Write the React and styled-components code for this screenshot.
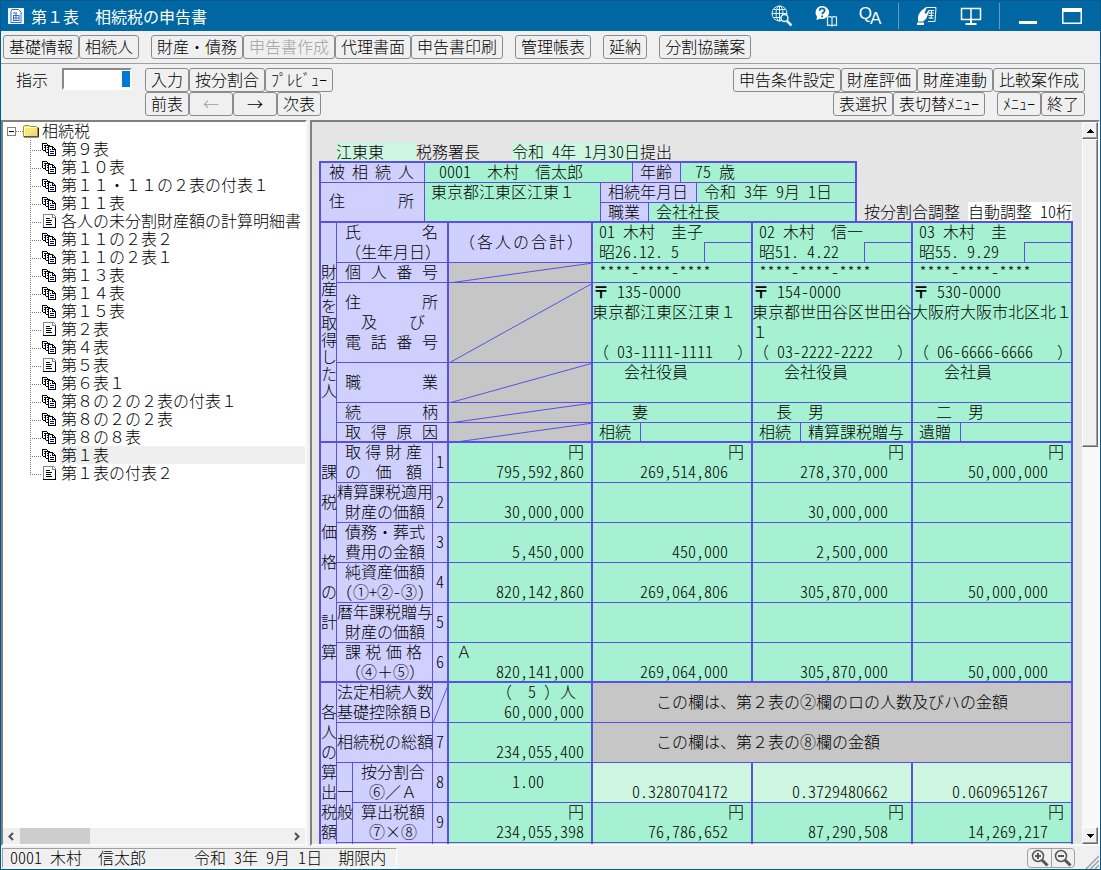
import styled, { createGlobalStyle, css } from "styled-components";

const LINE = "#5a50e6";
const LABEL = "#d0d0ff";
const GREEN = "#a6f1d1";
const PALE = "#cdf5df";
const GRAY = "#c6c6c6";

const tree = [
  ["第９表", "multi"],
  ["第１０表", "multi"],
  ["第１１・１１の２表の付表１", "multi"],
  ["第１１表", "multi"],
  ["各人の未分割財産額の計算明細書", "single"],
  ["第１１の２表２", "multi"],
  ["第１１の２表１", "multi"],
  ["第１３表", "multi"],
  ["第１４表", "multi"],
  ["第１５表", "multi"],
  ["第２表", "single"],
  ["第４表", "multi"],
  ["第５表", "single"],
  ["第６表１", "multi"],
  ["第８の２の２表の付表１", "multi"],
  ["第８の２の２表", "multi"],
  ["第８の８表", "multi"],
  ["第１表", "multi"],
  ["第１表の付表２", "single"],
];

const heirs = [
  {
    name: "01 木村　圭子",
    birth: "昭26.12. 5",
    zip: "135-0000",
    address: "東京都江東区江東１",
    tel: "03-1111-1111",
    job: "会社役員",
    relation: "　妻　",
    cause: ["相続", ""],
  },
  {
    name: "02 木村　信一",
    birth: "昭51. 4.22",
    zip: "154-0000",
    address: "東京都世田谷区世田谷１",
    tel: "03-2222-2222",
    job: "会社役員",
    relation: "長　男",
    cause: ["相続", "精算課税贈与"],
  },
  {
    name: "03 木村　圭",
    birth: "昭55. 9.29",
    zip: "530-0000",
    address: "大阪府大阪市北区北１",
    tel: "06-6666-6666",
    job: "会社員",
    relation: "二　男",
    cause: ["遺贈", ""],
  },
];

const taxable = [
  {
    no: "1",
    label: ["取得財産", "の価額"],
    spread: true,
    yen: true,
    values: ["795,592,860", "269,514,806", "278,370,000", "50,000,000"],
  },
  {
    no: "2",
    label: ["精算課税適用", "財産の価額"],
    values: ["30,000,000", "", "30,000,000", ""],
  },
  {
    no: "3",
    label: ["債務・葬式", "費用の金額"],
    values: ["5,450,000", "450,000", "2,500,000", ""],
  },
  {
    no: "4",
    label: ["純資産価額", "(①+②-③)"],
    values: ["820,142,860", "269,064,806", "305,870,000", "50,000,000"],
  },
  {
    no: "5",
    label: ["暦年課税贈与", "財産の価額"],
    values: ["", "", "", ""],
  },
  {
    no: "6",
    label: ["課税価格", "（④＋⑤）"],
    spreadFirst: true,
    mark: "Ａ",
    values: ["820,141,000", "269,064,000", "305,870,000", "50,000,000"],
  },
];

// ASCII runs take the half-width glyphs, so that two of them fill one kanji cell
const Mixed = ({ children }) =>
  [children]
    .flat()
    .join("")
    .split(/([ -~]+)/)
    .map((run, i) => (i % 2 ? <Half key={i}>{run}</Half> : run));

const MultiPageIcon = () => (
  <svg width="15" height="14" viewBox="0 0 15 14" shapeRendering="crispEdges">
    <path d="M0 1h5v1h1v1h1v6H1V8H0z" fill="#000" />
    <path d="M1 2h4v2h1v4H1z" fill="#fff" />
    <path d="M2 3.5h1M2 5.5h1" stroke="#000080" />
    <path d="M3 3h5v1h1v1h1v6H4v-1H3z" fill="#000" />
    <path d="M4 4h3v2h2v4H4z" fill="#fff" />
    <path d="M5 5.5h1M5 7.5h1" stroke="#000080" />
    <path d="M6 4h5v1h1v1h1v1h1v7H6z" fill="#000" />
    <path d="M7 5h3v3h3v5H7z" fill="#fff" />
    <path d="M11 6h1v1h-1z" fill="#fff" />
    <path d="M8 7.5h1M8 9.5h4M8 11.5h4" stroke="#000080" />
  </svg>
);

const SinglePageIcon = () => (
  <svg width="15" height="16" viewBox="0 0 15 16" shapeRendering="crispEdges">
    <path d="M1 1h9l4 4v10H1z" fill="#fff" />
    <path d="M1.5 15V1.5H10" fill="none" stroke="#848484" />
    <path d="M1 14.5h12.5V4" fill="none" stroke="#000" />
    <path d="M10 1h2v1h1v1h1v2h-4z" fill="#848484" />
    <path d="M11 2h1v1h1v1h-2z" fill="#fff" />
    <path d="M4 5.5h4M4 7.5h6M4 9.5h5M4 11.5h6" stroke="#000" />
  </svg>
);

const FolderIcon = () => (
  <svg width="16" height="14" viewBox="0 0 16 14">
    <path d="M.5 12.500V2.500l1-1h5l1 1h6l1 1v9z" fill="#f5e878" stroke="#a59a18" />
    <path d="M1.500 12V3.500h12" fill="none" stroke="#fffdd0" />
    <path d="M6 12 13.500 5v7z" fill="#f7cf8c" />
    <path d="M1 13h14.500V3.500" stroke="#222" fill="none" />
  </svg>
);

const AppIcon = () => (
  <svg width="16" height="16" viewBox="0 0 16 16">
    <path d="M0 0h16v16H0z" fill="#f4f8ff" />
    <path d="M4 1.500h6.500L13 4v10.500H3v-11z" fill="#fff" stroke="#2b6fd0" />
    <path d="M5 5h4M5 7.500h6M5 10h6M5 12.500h6M8 5v7.500M11 7v6M5.500 7v6" stroke="#2b6fd0" fill="none" />
  </svg>
);

const GlobeSearchIcon = () => (
  <svg width="22" height="22" viewBox="0 0 22 22" fill="none" stroke="#e4f0f8">
    <circle cx="8.500" cy="8.500" r="7.500" />
    <ellipse cx="8.500" cy="8.500" rx="3.500" ry="7.500" />
    <path d="M8.500 1v15M1 8.500h15M2.500 4.500h12M2.500 12.500h12" />
    <circle cx="13.500" cy="13" r="3.500" fill="#0067a3" strokeWidth="1.500" />
    <path d="m16 16 4.500 4.500" strokeWidth="2.500" />
  </svg>
);

const HelpBookIcon = () => (
  <svg width="24" height="22" viewBox="0 0 24 22">
    <path d="M8 1a7 6.500 0 1 1-2 12.700L2.500 15l.5-3.500A6.500 6.500 0 0 1 8 1z" fill="#fff" />
    <path d="M5.700 5.800c0-3.200 5-3 5-.3 0 1.700-2.500 1.700-2.500 3.800M8.200 10.500v1.800" fill="none" stroke="#0067a3" strokeWidth="1.800" />
    <path d="M18 12v8M13.500 12c2-.8 3.500-.5 4.500.5 1-1 2.500-1.300 4.500-.5v8.500c-2-.6-3.500-.4-4.500.5-1-.9-2.500-1.100-4.500-.5z" fill="#0067a3" stroke="#e4f0f8" strokeWidth="1.200" />
  </svg>
);

const HandPageIcon = () => (
  <svg width="22" height="22" viewBox="0 0 22 22">
    <path d="M10.500 2.500h9.500l-1 14h-7" fill="none" stroke="#fff" />
    <path d="M13 5.500h5M12.500 8h5.500M12.500 10.500h5M12.500 13h5M15.500 6l-.5 8" stroke="#fff" fill="none" />
    <path d="M2 16.500V12c0-1 .5-2 1-3l2-3 5-4 .8 1L8.500 7.500 10 9l2.500-4 1 .8-2.500 6-1 2.200-3 2.500z" fill="#fff" />
    <path d="M1 17.500h7V20H1z" fill="#fff" />
  </svg>
);

const DualScreenIcon = () => (
  <svg width="22" height="20" viewBox="0 0 22 20" fill="none" stroke="#fff">
    <path d="M1.500 2.500h19v11h-19zM11 2v12" strokeWidth="1.500" />
    <path d="M11 13.500V18M5.500 18h11" strokeWidth="2" />
  </svg>
);

const MinimizeIcon = () => (
  <svg width="20" height="18" viewBox="0 0 20 18">
    <path d="M1 14h18v3H1z" fill="#fff" />
  </svg>
);

const MaximizeIcon = () => (
  <svg width="20" height="16" viewBox="0 0 20 16">
    <path d="M0 0h20v16H0zM1.500 4v10.500h17V4z" fill="#fff" fillRule="evenodd" />
  </svg>
);

const ZoomIcon = ({ plus }) => (
  <svg width="18" height="18" viewBox="0 0 18 18" fill="none" stroke="#555">
    <circle cx="7" cy="7" r="5.500" strokeWidth="1.500" />
    <path d={plus ? "M4 7h6M7 4v6" : "M4 7h6"} strokeWidth="2" />
    <path d="m11 11 5.500 5.500" strokeWidth="3" />
  </svg>
);

const Triangle = ({ down }) => (
  <svg width="7" height="4" viewBox="0 0 7 4" shapeRendering="crispEdges">
    <path d={down ? "M0 0h7L3.500 4z" : "M0 4h7L3.500 0z"} fill="#000" />
  </svg>
);

const Chevron = ({ right }) => (
  <svg width="6" height="9" viewBox="0 0 6 9" fill="none" stroke="#505050" strokeWidth="2">
    <path d={right ? "M1 1l3.500 3.500L1 8" : "M5 1 1.500 4.500 5 8"} />
  </svg>
);

const Slash = ({ height }) => (
  <SlashSvg $height={height}>
    <line x1="0" y1="100%" x2="100%" y2="0" stroke={LINE} />
  </SlashSvg>
);

const Tree = () => (
  <TreeList>
    <TreeRoot>
      <Expander aria-label="閉じる" />
      <RootDots />
      <FolderIcon />
      <RootName>相続税</RootName>
    </TreeRoot>
    {tree.map(([name, kind], i) => (
      <TreeItem key={name}>
        <Branch $last={i === tree.length - 1} />
        <PageSlot>{kind === "multi" ? <MultiPageIcon /> : <SinglePageIcon />}</PageSlot>
        <TreeName $selected={name === "第１表"}>{name}</TreeName>
      </TreeItem>
    ))}
  </TreeList>
);

const Decedent = () => (
  <DecedentGrid>
    <Box $col="1 / 2" $label>
      <Spread>被相続人</Spread>
    </Box>
    <Box $col="2 / 4">
      <Line $pad={14}><Mixed>0001　木村　信太郎</Mixed></Line>
    </Box>
    <Box $col="4 / 6" $label>
      <Line $pad={7}>年齢</Line>
    </Box>
    <Box $col="6 / 8" $r={2}>
      <Line $pad={14}><Mixed>75 歳</Mixed></Line>
    </Box>
    <Box $col="1 / 2" $row="2 / 4" $label $b={0}>
      <Spread>住所</Spread>
    </Box>
    <Box $col="2 / 3" $row="2 / 4" $b={0}>
      <Line $pad={6}>東京都江東区江東１</Line>
    </Box>
    <Box $col="3 / 7" $label>
      <Line $pad={7}>相続年月日</Line>
    </Box>
    <Box $col="7 / 8" $r={2}>
      <Line $pad={7}><Mixed>令和 3年 9月 1日</Mixed></Line>
    </Box>
    <Box $col="3 / 5" $label $b={0}>
      <Line $pad={7}>職業</Line>
    </Box>
    <Box $col="5 / 8" $r={2} $b={0}>
      <Line $pad={7}>会社社長</Line>
    </Box>
  </DecedentGrid>
);

const HeirRows = () => (
  <>
    <tr>
      <Head rowSpan="6" $b={2}>
        <Vertical $pitch={17}>財産を取得した人</Vertical>
      </Head>
      <Head colSpan="3" $r={2}>
        <Spread>氏名</Spread>
        <Line $center>（生年月日）</Line>
      </Head>
      <Head $r={2}>
        <Spread $left={10}>（各人の合計）</Spread>
      </Head>
      {heirs.map((h) => (
        <Cell key={h.name} $r={2} $top>
          <Line $pad={6}><Mixed>{h.name}</Mixed></Line>
          <BirthLine>
            <span><Mixed>{h.birth}</Mixed></span>
            <BirthBox />
          </BirthLine>
        </Cell>
      ))}
    </tr>
    <tr>
      <Head colSpan="3" $r={2}>
        <Spread>個人番号</Spread>
      </Head>
      <Cell $r={2} $bg={GRAY}>
        <Slash height={20} />
      </Cell>
      {heirs.map((h) => (
        <Cell key={h.name} $r={2}>
          <Line $pad={6}><Mixed>****-****-****</Mixed></Line>
        </Cell>
      ))}
    </tr>
    <tr>
      <Head colSpan="3" $r={2}>
        <Spread>住所</Spread>
        <Spread $left={24}>及び</Spread>
        <Spread>電話番号</Spread>
      </Head>
      <Cell $r={2} $bg={GRAY}>
        <Slash height={80} />
      </Cell>
      {heirs.map((h) => (
        <Cell key={h.name} $r={2} $top>
          <Line>
            <PostMark>〒</PostMark>
            <Mixed> {h.zip}</Mixed>
          </Line>
          <Address>{h.address}</Address>
          <Line>
            <Mixed>（ {h.tel}{"   "}）</Mixed>
          </Line>
        </Cell>
      ))}
    </tr>
    <tr>
      <Head colSpan="3" $r={2}>
        <Spread>職業</Spread>
      </Head>
      <Cell $r={2} $bg={GRAY}>
        <Slash height={40} />
      </Cell>
      {heirs.map((h) => (
        <Cell key={h.name} $r={2} $top $tall>
          <Line $pad={31}>{h.job}</Line>
        </Cell>
      ))}
    </tr>
    <tr>
      <Head colSpan="3" $r={2}>
        <Spread>続柄</Spread>
      </Head>
      <Cell $r={2} $bg={GRAY}>
        <Slash height={20} />
      </Cell>
      {heirs.map((h) => (
        <Cell key={h.name} $r={2}>
          <Line $pad={23}>{h.relation}</Line>
        </Cell>
      ))}
    </tr>
    <tr>
      <Head colSpan="3" $r={2} $b={2}>
        <Spread>取得原因</Spread>
      </Head>
      <Cell $r={2} $b={2} $bg={GRAY}>
        <Slash height={20} />
      </Cell>
      {heirs.map((h) => (
        <Cell key={h.name} $r={2} $b={2}>
          <CauseLine>
            <Cause>{h.cause[0]}</Cause>
            <span>{h.cause[1]}</span>
          </CauseLine>
        </Cell>
      ))}
    </tr>
  </>
);

const Amounts = ({ values, yen, mark, bg, b, skipTotal }) =>
  values.map((value, i) => (
    <Cell key={i} $r={2} $b={b} $bg={bg} $tall>
      {mark && i === 0 && <Line $pad={7}>{mark}</Line>}
      {yen && <Amount $right={9}>円</Amount>}
      <Amount $right={i === 0 && !skipTotal ? 9 : 25}>
        <Mixed>{value}</Mixed>
      </Amount>
    </Cell>
  ));

const TaxableRows = () =>
  taxable.map((row, i) => {
    const b = i === taxable.length - 1 ? 2 : 1;
    return (
      <tr key={row.no}>
        {i === 0 && (
          <Head rowSpan="6" $b={2}>
            <Vertical $pitch={30}>課税価格の計算</Vertical>
          </Head>
        )}
        <Head colSpan="2" $b={b} $tall>
          {row.spread || row.spreadFirst ? (
            <Spread>{row.label[0]}</Spread>
          ) : (
            <Line $center>{row.label[0]}</Line>
          )}
          {row.spread ? (
            <Spread>{row.label[1]}</Spread>
          ) : (
            <Line $center><Mixed>{row.label[1]}</Mixed></Line>
          )}
        </Head>
        <Head $r={2} $b={b}>
          <RowNo><Mixed>{row.no}</Mixed></RowNo>
        </Head>
        <Amounts values={row.values} yen={row.yen} mark={row.mark} b={b} />
      </tr>
    );
  });

const CalculationRows = () => (
  <>
    <tr>
      <Head rowSpan="5">
        <Vertical $pitch={20}>各人の算出税額</Vertical>
      </Head>
      <Head colSpan="2">
        <Line $center>法定相続人数</Line>
        <Line $center>基礎控除額Ｂ</Line>
      </Head>
      <Head $r={2}>
        <Slash height={40} />
      </Head>
      <Cell $r={2}>
        <Amount $right={17}><Mixed>（  5 ）人</Mixed></Amount>
        <Amount $right={9}><Mixed>60,000,000</Mixed></Amount>
      </Cell>
      <Cell colSpan="3" $r={2} $bg={GRAY}>
        <Line $pad={63}>この欄は、第２表の②欄のロの人数及びハの金額</Line>
      </Cell>
    </tr>
    <tr>
      <Head colSpan="2" $tall>
        <Line $center>相続税の総額</Line>
      </Head>
      <Head $r={2}>
        <RowNo><Mixed>7</Mixed></RowNo>
      </Head>
      <Amounts values={["234,055,400"]} />
      <Cell colSpan="3" $r={2} $bg={GRAY}>
        <Line $pad={63}>この欄は、第２表の⑧欄の金額</Line>
      </Cell>
    </tr>
    <tr>
      <Head rowSpan="2">
        <Vertical $pitch={20}>一般</Vertical>
      </Head>
      <Head>
        <Line $center>按分割合</Line>
        <Line $center>⑥／Ａ</Line>
      </Head>
      <Head $r={2}>
        <RowNo><Mixed>8</Mixed></RowNo>
      </Head>
      <Cell $r={2} $middle>
        <Amount $right={49}><Mixed>1.00</Mixed></Amount>
      </Cell>
      <Amounts values={["0.3280704172", "0.3729480662", "0.0609651267"]} bg={PALE} skipTotal />
    </tr>
    <tr>
      <Head>
        <Line $center>算出税額</Line>
        <Line $center>⑦×⑧</Line>
      </Head>
      <Head $r={2}>
        <RowNo><Mixed>9</Mixed></RowNo>
      </Head>
      <Amounts values={["234,055,398", "76,786,652", "87,290,508", "14,269,217"]} yen />
    </tr>
    <tr>
      <Head />
      <Head />
      <Head $r={2} />
      <Cell $r={2} />
      <Cell $r={2} />
      <Cell $r={2} />
      <Cell $r={2}>
        <Line />
      </Cell>
    </tr>
  </>
);

const App = () => {
  return (
    <>
      <GlobalStyle />
      <Window>
        <TitleBar>
          <AppIcon />
          <Title>第１表　相続税の申告書</Title>
          <TitleButton aria-label="検索"><GlobeSearchIcon /></TitleButton>
          <TitleButton aria-label="ヘルプ"><HelpBookIcon /></TitleButton>
          <TitleButton>
            <QaText>Q<QaLow>A</QaLow></QaText>
          </TitleButton>
          <TitleDivider />
          <TitleButton aria-label="帳票"><HandPageIcon /></TitleButton>
          <TitleButton aria-label="画面"><DualScreenIcon /></TitleButton>
          <TitleDivider />
          <TitleButton aria-label="最小化"><MinimizeIcon /></TitleButton>
          <TitleButton aria-label="最大化"><MaximizeIcon /></TitleButton>
        </TitleBar>

        <MenuBar>
          <ButtonGroup>
            <Button>基礎情報</Button>
            <Button>相続人</Button>
          </ButtonGroup>
          <ButtonGroup>
            <Button>財産・債務</Button>
            <Button disabled>申告書作成</Button>
            <Button>代理書面</Button>
            <Button>申告書印刷</Button>
          </ButtonGroup>
          <Button>管理帳表</Button>
          <Button>延納</Button>
          <Button>分割協議案</Button>
        </MenuBar>

        <ToolBar>
          <CommandLabel htmlFor="command">指示</CommandLabel>
          <CommandField>
            <CommandInput id="command" />
            <Caret />
          </CommandField>
          <div>
            <ButtonGroup>
              <Button>入力</Button>
              <Button>按分割合</Button>
              <Button>ﾌﾟﾚﾋﾞｭｰ</Button>
            </ButtonGroup>
            <ButtonGroup>
              <Button>前表</Button>
              <Button $wide disabled>←</Button>
              <Button $wide>→</Button>
              <Button>次表</Button>
            </ButtonGroup>
          </div>
          <RightTools>
            <ButtonGroup>
              <Button>申告条件設定</Button>
              <Button>財産評価</Button>
              <Button>財産連動</Button>
              <Button>比較案作成</Button>
            </ButtonGroup>
            <ToolRow>
              <ButtonGroup>
                <Button>表選択</Button>
                <Button>表切替ﾒﾆｭｰ</Button>
              </ButtonGroup>
              <ButtonGroup>
                <Button>ﾒﾆｭｰ</Button>
                <Button>終了</Button>
              </ButtonGroup>
            </ToolRow>
          </RightTools>
        </ToolBar>

        <Workspace>
          <SidePanel>
            <Tree />
            <SideScroll>
              <Chevron />
              <SideTrack>
                <SideThumb />
              </SideTrack>
              <Chevron right />
            </SideScroll>
          </SidePanel>
          <MainPanel>
            <Sheet>
              <Submission>
                <Filled $width={80}>江東東</Filled>
                <Office>税務署長</Office>
                <Filled $width={128}><Mixed>令和 4年 1月30日</Mixed></Filled>
                <span>提出</span>
              </Submission>
              <TopRow>
                <Decedent />
                <Adjust>
                  按分割合調整
                  <AdjustValue><Mixed>自動調整 10桁</Mixed></AdjustValue>
                </Adjust>
              </TopRow>
              <FormTable>
                <colgroup>
                  <Col $width={16} />
                  <Col $width={16} />
                  <Col $width={80} />
                  <Col $width={16} />
                  <Col $width={144} />
                  <col />
                  <col />
                  <col />
                </colgroup>
                <tbody>
                  <HeirRows />
                  <TaxableRows />
                  <CalculationRows />
                </tbody>
              </FormTable>
            </Sheet>
            <SheetScroll>
              <ScrollButton aria-label="上へ"><Triangle /></ScrollButton>
              <SheetThumb />
              <ScrollSpace />
              <ScrollButton aria-label="下へ"><Triangle down /></ScrollButton>
            </SheetScroll>
          </MainPanel>
        </Workspace>

        <StatusBar>
          <StatusPane>
            <StatusName><Mixed>0001 木村　信太郎</Mixed></StatusName>
            <span><Mixed>令和 3年 9月 1日</Mixed></span>
            <span>期限内</span>
          </StatusPane>
          <ZoomGroup>
            <ZoomButton aria-label="拡大"><ZoomIcon plus /></ZoomButton>
            <ZoomButton aria-label="縮小"><ZoomIcon /></ZoomButton>
          </ZoomGroup>
          <svg width="14" height="14" viewBox="0 0 14 14" stroke="#a0a0a0">
            <path d="M1 14 14 1M5.500 14 14 5.500M10 14l4-4" strokeWidth="1.500" />
          </svg>
        </StatusBar>
      </Window>
    </>
  );
};

const GlobalStyle = createGlobalStyle`
  * {
    box-sizing: border-box;
  }

  body {
    margin: 0;
    color: #000;
    font-family: "Noto Sans CJK JP", sans-serif;
    font-size: 16px;
    font-weight: 300;
    line-height: 20px;
  }

  button,
  input {
    margin: 0;
    padding: 0;
    border: 0;
    background: none;
    color: inherit;
    font: inherit;
  }
`;

const Half = styled.span`
  font-feature-settings: "hwid";
`;

const Window = styled.div`
  display: flex;
  flex-direction: column;
  height: 100vh;
  border: 1px solid #005a92;
  background: #f0f0f0;
  white-space: nowrap;
  overflow: hidden;
`;

const TitleBar = styled.header`
  display: flex;
  align-items: center;
  flex: none;
  height: 30px;
  padding: 0 6px 0 7px;
  background: #0067a3;
  color: #fff;
`;

const Title = styled.h1`
  flex: 1;
  margin: 0 0 0 7px;
  font-size: 16px;
  font-weight: 400;
`;

const TitleButton = styled.button`
  display: flex;
  align-items: center;
  justify-content: center;
  width: 44px;
  height: 30px;
`;

const TitleDivider = styled.span`
  width: 1px;
  height: 26px;
  margin: 0 6px;
  background: #5d9fc6;
`;

const QaText = styled.span`
  display: flex;
  font-family: "Liberation Sans", sans-serif;
  font-size: 17px;
  font-weight: 400;
  line-height: 18px;
`;

const QaLow = styled.span`
  padding-top: 5px;
  margin-left: -2px;
`;

const MenuBar = styled.nav`
  display: flex;
  gap: 12px;
  flex: none;
  height: 33px;
  padding: 4px 2px;
  border-bottom: 1px solid #a0a0a0;
`;

const ButtonGroup = styled.div`
  display: flex;
`;

const Button = styled.button`
  flex: none;
  width: ${(p) => (p.$wide ? "44px" : "auto")};
  height: 24px;
  padding: 0 5px 2px;
  border: 1px solid #8c8c8c;
  border-radius: 3px;
  line-height: 20px;

  &:disabled {
    color: #a0a0a0;
  }
`;

const ToolBar = styled.div`
  display: flex;
  flex: none;
  padding: 4px 15px;
`;

const CommandLabel = styled.label`
  margin-right: 14px;
  line-height: 22px;
`;

const CommandField = styled.div`
  display: flex;
  align-items: center;
  width: 70px;
  height: 22px;
  margin-right: 13px;
  border: 2px solid;
  border-color: #8a8a8a #fff #fff #8a8a8a;
  background: #fff;
`;

const CommandInput = styled.input`
  flex: 1;
  min-width: 0;
  outline: none;
`;

const Caret = styled.span`
  width: 8px;
  height: 16px;
  background: #0078d7;
`;

const RightTools = styled.div`
  display: flex;
  flex-direction: column;
  align-items: flex-end;
  margin-left: auto;
`;

const ToolRow = styled.div`
  display: flex;
  gap: 12px;
`;

const Workspace = styled.main`
  display: flex;
  flex: 1;
  gap: 3px;
  min-height: 0;
`;

const sunken = css`
  border: 2px solid;
  border-color: #808080 #fafafa #fafafa #808080;
`;

const SidePanel = styled.aside`
  ${sunken}
  display: flex;
  flex-direction: column;
  flex: none;
  width: 306px;
  background: #fff;
`;

const TreeList = styled.ul`
  flex: 1;
  min-height: 0;
  margin: 0;
  padding: 0;
  list-style: none;
  line-height: 16px;
`;

const TreeRoot = styled.li`
  display: flex;
  align-items: center;
  height: 18px;
  padding-left: 4px;
`;

const Expander = styled.button`
  width: 9px;
  height: 9px;
  border: 1px solid #808080;
  background: linear-gradient(#000, #000) center / 5px 1px no-repeat;
`;

const RootDots = styled.span`
  width: 7px;
  height: 1px;
  background: repeating-linear-gradient(90deg, #808080 0 1px, transparent 1px 2px);
`;

const RootName = styled.span`
  height: 18px;
  margin-left: 3px;
`;

const TreeItem = styled.li`
  display: flex;
  align-items: center;
  height: 18px;
  padding-left: 27px;
`;

const Branch = styled.span`
  width: 12px;
  height: 18px;
  background:
    repeating-linear-gradient(#808080 0 1px, transparent 1px 2px) 0 0 / 1px ${(p) => (p.$last ? "10px" : "18px")} no-repeat,
    repeating-linear-gradient(90deg, #808080 0 1px, transparent 1px 2px) 0 10px / 12px 1px no-repeat;
`;

const PageSlot = styled.span`
  display: flex;
  align-items: center;
  width: 18px;
  height: 18px;
`;

const TreeName = styled.span`
  flex: 1;
  height: 18px;
  padding-left: 1px;
  background: ${(p) => (p.$selected ? "#efefef" : "none")};
`;

const SideScroll = styled.div`
  display: flex;
  align-items: center;
  flex: none;
  height: 16px;
  padding: 0 5px;
  background: #f0f0f0;
`;

const SideTrack = styled.div`
  flex: 1;
  padding: 0 6px;
`;

const SideThumb = styled.div`
  width: 26%;
  height: 16px;
  background: #cdcdcd;
`;

const MainPanel = styled.section`
  ${sunken}
  display: flex;
  flex: 1;
  min-width: 0;
  background: #e5e5e5;
`;

const Sheet = styled.div`
  flex: 1;
  min-width: 0;
  padding: 20px 9px 0 7px;
  overflow: hidden;
`;

const Submission = styled.div`
  display: flex;
  height: 19px;
  padding-left: 17px;
  line-height: 18px;
`;

const Filled = styled.span`
  width: ${(p) => p.$width}px;
  background: ${PALE};
`;

const Office = styled.span`
  width: 96px;
`;

const TopRow = styled.div`
  display: flex;
  align-items: flex-end;
`;

const DecedentGrid = styled.div`
  display: grid;
  grid-template-columns: 104px 176px 32px 16px 32px 16px 160px;
  grid-template-rows: 20px 20px 18px;
  border: solid ${LINE};
  border-width: 2px 0 0 2px;
`;

const lines = css`
  box-shadow:
    inset -${(p) => p.$r ?? 1}px 0 ${LINE},
    inset 0 -${(p) => p.$b ?? 1}px ${LINE};
`;

const Box = styled.div`
  ${lines}
  grid-column: ${(p) => p.$col};
  grid-row: ${(p) => p.$row ?? "auto"};
  align-content: ${(p) => (p.$row && p.$label ? "center" : "start")};
  background: ${(p) => (p.$label ? LABEL : GREEN)};
`;

const Adjust = styled.div`
  display: flex;
  gap: 8px;
  margin-left: 7px;
  line-height: 19px;
`;

const AdjustValue = styled.span`
  background: #fff;
`;

const FormTable = styled.table`
  width: 100%;
  table-layout: fixed;
  border-spacing: 0;
  border: solid ${LINE};
  border-width: 2px 0 0 2px;
`;

const Col = styled.col`
  width: ${(p) => p.$width}px;
`;

const Head = styled.th`
  ${lines}
  height: ${(p) => (p.$tall ? "40px" : "auto")};
  padding: 0;
  background: ${LABEL};
  font-weight: inherit;
  text-align: left;
  vertical-align: middle;
`;

const Cell = styled.td`
  ${lines}
  height: ${(p) => (p.$tall ? "40px" : "auto")};
  padding: 0;
  background: ${(p) => p.$bg ?? GREEN};
  vertical-align: ${(p) => {
    if (p.$top) return "top";
    return p.$middle || p.colSpan ? "middle" : "bottom";
  }};
`;

const sheetLine = css`
  height: 20px;
  line-height: 16px;
  white-space: pre;
`;

const Line = styled.div`
  ${sheetLine}
  padding-left: ${(p) => p.$pad ?? 0}px;
  text-align: ${(p) => (p.$center ? "center" : "left")};
`;

const RowNo = styled(Line)`
  padding-left: 3px;
`;

const Spread = styled.div`
  ${sheetLine}
  padding: 0 ${(p) => p.$left ?? 11}px 0 ${(p) => p.$left ?? 8}px;
  text-align-last: justify;
  text-justify: inter-character;
  white-space: normal;
`;

const Vertical = styled.div`
  width: 16px;
  padding-bottom: 4px;
  line-height: ${(p) => p.$pitch}px;
  white-space: normal;
  word-break: break-all;
`;

const BirthLine = styled.div`
  ${sheetLine}
  display: flex;
  justify-content: space-between;
  padding-left: 6px;
`;

const BirthBox = styled.span`
  width: 49px;
  height: 21px;
  margin-top: -1px;
  border: solid ${LINE};
  border-width: 1px 0 0 1px;
`;

const PostMark = styled.span`
  font-weight: 700;
`;

const Address = styled.div`
  height: 42px;
  margin: -2px 0 0 -1px;
  white-space: normal;
  word-break: break-all;
`;

const CauseLine = styled.div`
  ${sheetLine}
  display: flex;
  gap: 7px;
  padding-left: 6px;
`;

const Cause = styled.span`
  width: 42px;
  height: 20px;
  border-right: 1px solid ${LINE};
`;

const Amount = styled.div`
  ${sheetLine}
  padding-right: ${(p) => p.$right}px;
  text-align: right;
`;

const SlashSvg = styled.svg`
  display: block;
  width: 100%;
  height: ${(p) => p.$height}px;
`;

const SheetScroll = styled.div`
  display: flex;
  flex-direction: column;
  flex: none;
  width: 16px;
  background: #f8f8f8;
`;

const raised = css`
  border: 1px solid;
  border-color: #fff #696969 #696969 #fff;
  background: #f0f0f0;
  box-shadow: inset -1px -1px #a0a0a0;
`;

const ScrollButton = styled.button`
  ${raised}
  display: flex;
  align-items: center;
  justify-content: center;
  flex: none;
  height: 17px;
`;

const SheetThumb = styled.div`
  ${raised}
  flex: 307;
`;

const ScrollSpace = styled.div`
  flex: 381;
`;

const StatusBar = styled.footer`
  display: flex;
  align-items: flex-end;
  flex: none;
  height: 23px;
  padding: 2px 1px 0;
`;

const StatusPane = styled.div`
  display: flex;
  gap: 16px;
  height: 20px;
  margin-right: auto;
  padding: 0 10px 0 7px;
  border: 1px solid;
  border-color: #a0a0a0 #fff #fff #a0a0a0;
  align-self: flex-start;
  line-height: 16px;
`;

const StatusName = styled.span`
  margin-right: 32px;
`;

const ZoomGroup = styled.div`
  display: flex;
  align-self: flex-start;
  margin-right: 10px;
  border: 1px solid #a0a0a0;
  border-radius: 4px;
`;

const ZoomButton = styled.button`
  display: flex;
  align-items: center;
  justify-content: center;
  width: 23px;
  height: 18px;

  & + & {
    border-left: 1px solid #a0a0a0;
  }
`;

export default App;
